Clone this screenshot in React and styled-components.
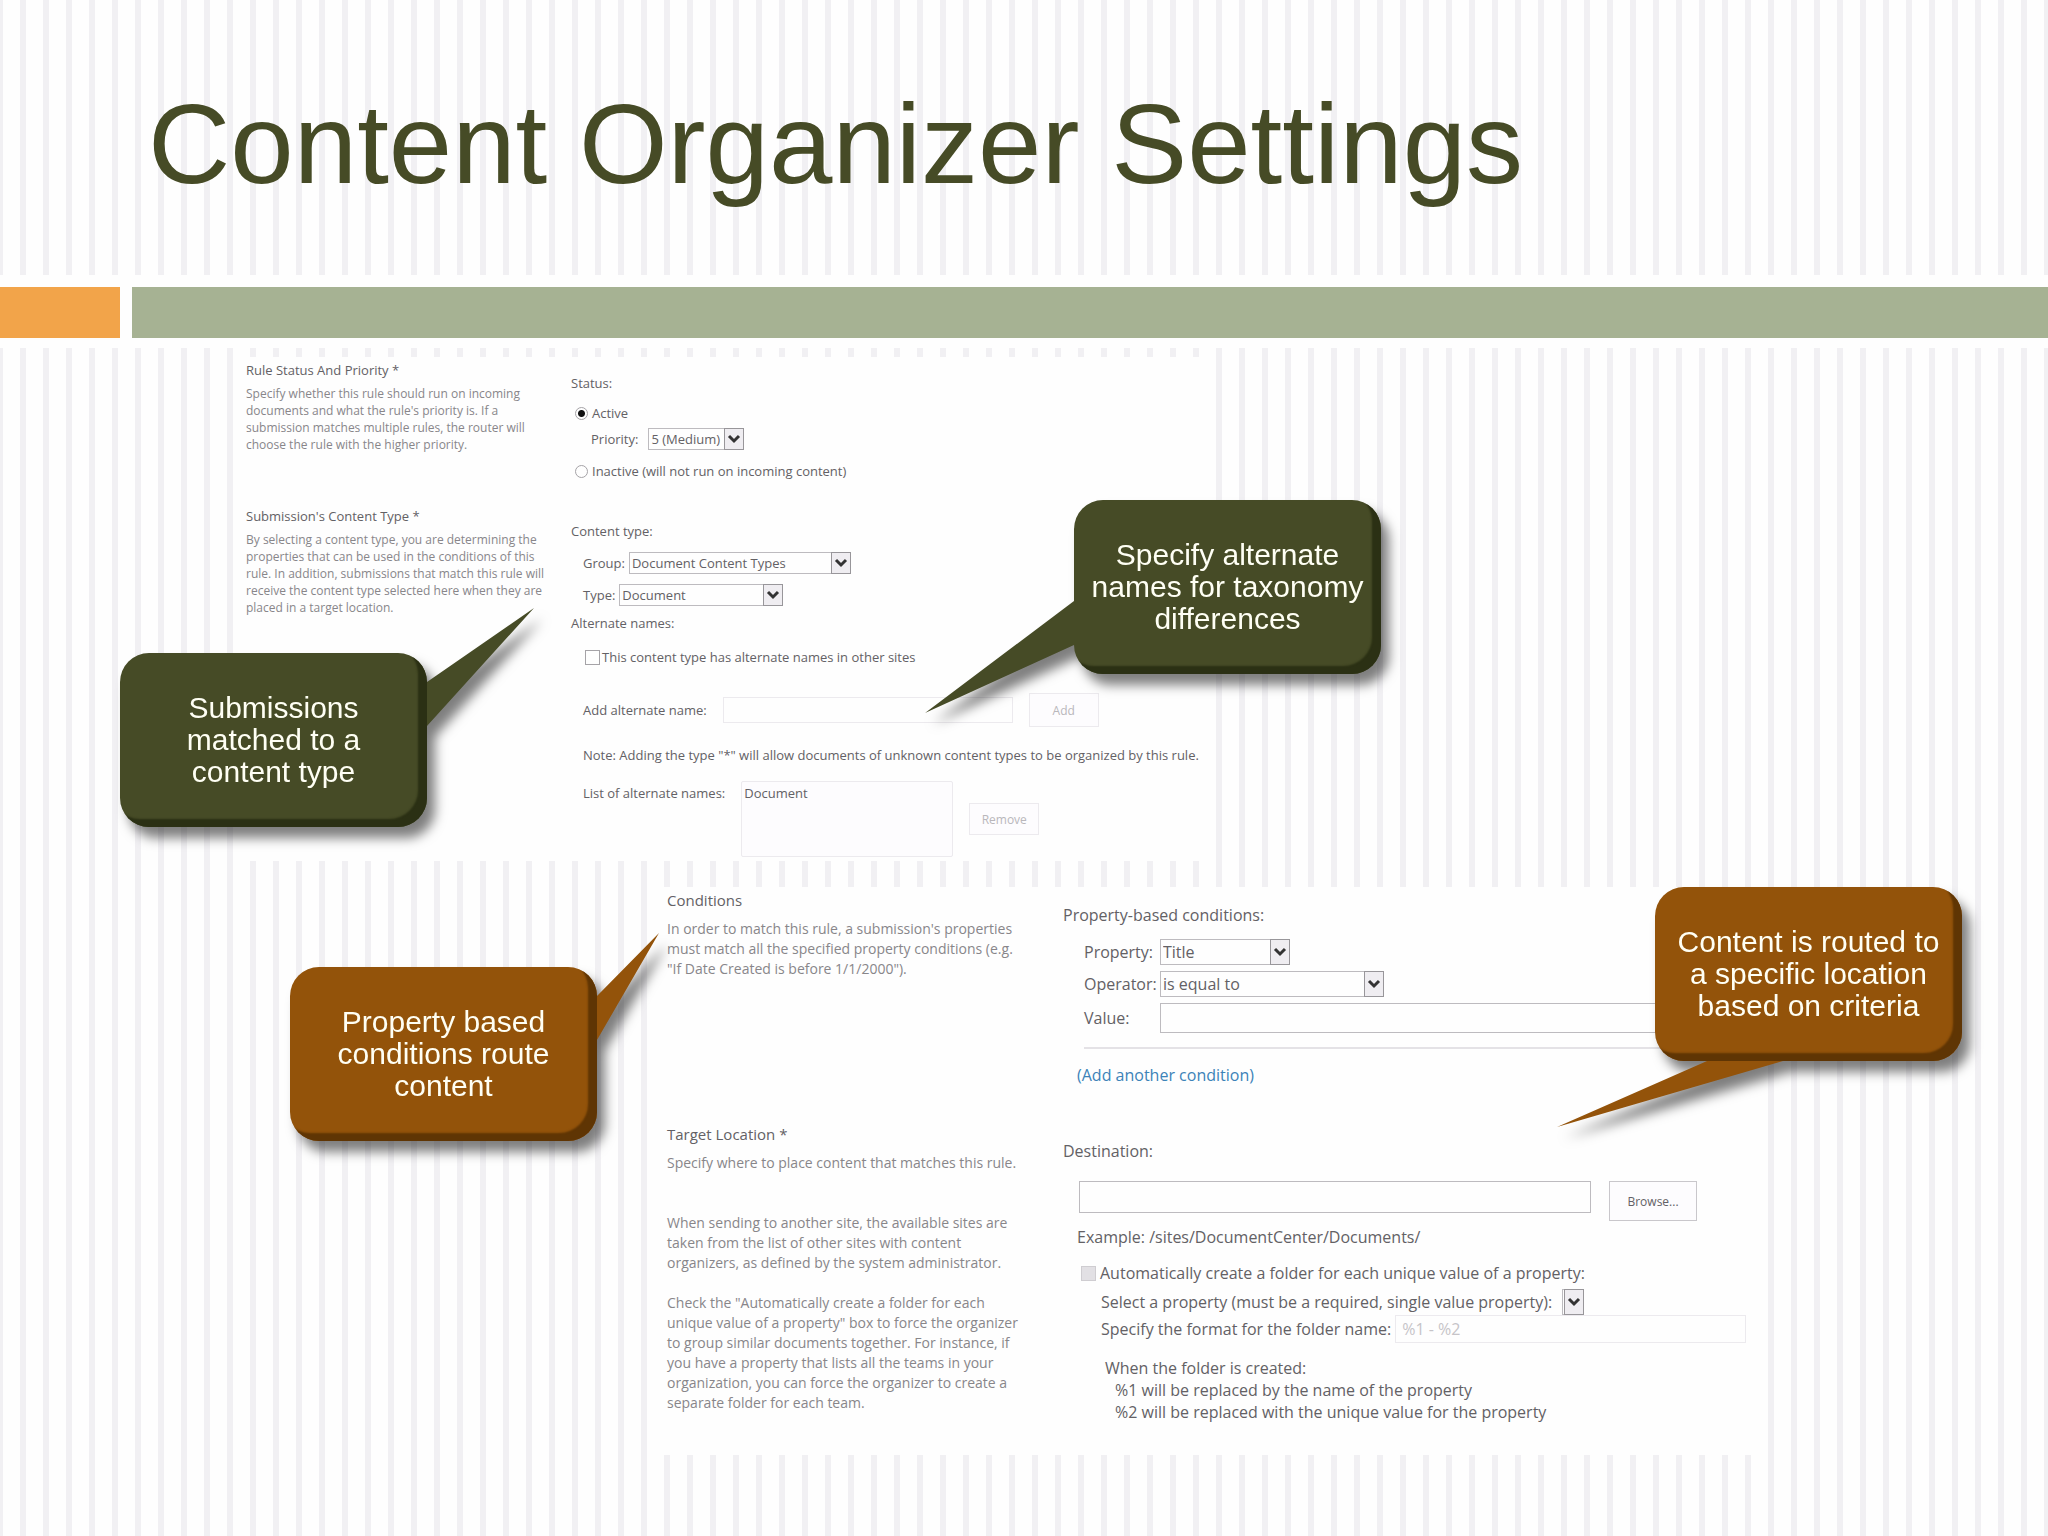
import React from "react";
import styled, { createGlobalStyle } from "styled-components";

const GlobalStyle = createGlobalStyle`
  * {
    box-sizing: border-box;
  }

  body {
    margin: 0;
    min-height: 100vh;
    font-family: "Liberation Sans", Arial, sans-serif;
    background: #fefefe repeating-linear-gradient(
      to right,
      #f1f0f3 0,
      #f1f0f3 3px,
      #fefefe 3px,
      #fefefe 20px,
      #f1f0f3 20px,
      #f1f0f3 23px
    );
  }
`;

const green = { face: "#464b26", edge: "#2b3014" };
const brown = { face: "#93530a", edge: "#5f3504" };

const DropDown = ({ id, value, width, height, label }) => (
  <SelectWrap $width={width} $height={height}>
    <select id={id} defaultValue={value} aria-label={label}>
      <option>{value}</option>
    </select>
    <span className="arrow">
      <svg viewBox="0 0 14 10" width="14" height="10">
        <path d="M2 2 L7 7 L12 2" fill="none" stroke="#333" strokeWidth="3" />
      </svg>
    </span>
  </SelectWrap>
);

const Callout = ({ left, top, colors, tail, children }) => (
  <CalloutView $left={left} $top={top}>
    <svg width="307" height="174">
      <polygon points={tail} fill={colors.face} />
    </svg>
    <CalloutBox $colors={colors}>{children}</CalloutBox>
  </CalloutView>
);

const RuleSection = () => (
  <RulePanel>
    <Column>
      <Heading>Rule Status And Priority *</Heading>
      <Description $top={2}>
        Specify whether this rule should run on incoming
        <br />
        documents and what the rule's priority is. If a
        <br />
        submission matches multiple rules, the router will
        <br />
        choose the rule with the higher priority.
      </Description>

      <Heading $top={50}>Submission's Content Type *</Heading>
      <Description $top={2}>
        By selecting a content type, you are determining the
        <br />
        properties that can be used in the conditions of this
        <br />
        rule. In addition, submissions that match this rule will
        <br />
        receive the content type selected here when they are
        <br />
        placed in a target location.
      </Description>
    </Column>

    <Column>
      <Row $top={14}>Status:</Row>
      <Row $top={6} $indent={4} $gap={4}>
        <Radio id="active" name="status" defaultChecked />
        <label htmlFor="active">Active</label>
      </Row>
      <Row $top={2} $indent={20} $gap={10}>
        <label htmlFor="priority">Priority:</label>
        <DropDown id="priority" value="5 (Medium)" width={96} height={22} />
      </Row>
      <Row $top={8} $indent={4} $gap={4}>
        <Radio id="inactive" name="status" />
        <label htmlFor="inactive">
          Inactive (will not run on incoming content)
        </label>
      </Row>

      <Row $top={36}>Content type:</Row>
      <Row $top={8} $indent={12} $gap={4}>
        <label htmlFor="group">Group:</label>
        <DropDown
          id="group"
          value="Document Content Types"
          width={222}
          height={22}
        />
      </Row>
      <Row $top={8} $indent={12} $gap={4}>
        <label htmlFor="type">Type:</label>
        <DropDown id="type" value="Document" width={164} height={22} />
      </Row>
      <Row $top={4}>Alternate names:</Row>
      <Row $top={10} $indent={14} $gap={2}>
        <CheckBox id="alternate" />
        <label htmlFor="alternate">
          This content type has alternate names in other sites
        </label>
      </Row>
      <Row $top={24} $indent={12} $gap={16}>
        <label htmlFor="add-name">Add alternate name:</label>
        <TextBox id="add-name" $width={290} $height={26} $faint />
        <PanelButton type="button" $width={70} $height={34} $faint>
          Add
        </PanelButton>
      </Row>
      <Row $top={16} $indent={12}>
        Note: Adding the type "*" will allow documents of unknown content types
        to be organized by this rule.
      </Row>
      <Row $top={14} $indent={12} $gap={16} $align="flex-start">
        <label htmlFor="names">List of alternate names:</label>
        <ListBox id="names" size="4">
          <option>Document</option>
        </ListBox>
        <RemoveSlot>
          <PanelButton type="button" $width={70} $height={32} $faint>
            Remove
          </PanelButton>
        </RemoveSlot>
      </Row>
    </Column>

    <Callout
      left={-113}
      top={296}
      colors={green}
      tail="300,29 307,29 414,-45 307,73 300,73"
    >
      Submissions
      <br />
      matched to a
      <br />
      content type
    </Callout>
    <Callout
      left={841}
      top={143}
      colors={green}
      tail="7,101 0,101 -149,213 0,145 7,145"
    >
      Specify alternate
      <br />
      names for taxonomy
      <br />
      differences
    </Callout>
  </RulePanel>
);

const ConditionSection = () => (
  <ConditionPanel>
    <Column>
      <Heading>Conditions</Heading>
      <Description $top={6}>
        In order to match this rule, a submission's properties
        <br />
        must match all the specified property conditions (e.g.
        <br />
        "If Date Created is before 1/1/2000").
      </Description>

      <Heading $top={142}>Target Location *</Heading>
      <Description $top={6}>
        Specify where to place content that matches this rule.
      </Description>
      <Description $top={40}>
        When sending to another site, the available sites are
        <br />
        taken from the list of other sites with content
        <br />
        organizers, as defined by the system administrator.
      </Description>
      <Description $top={20}>
        Check the "Automatically create a folder for each
        <br />
        unique value of a property" box to force the organizer
        <br />
        to group similar documents together. For instance, if
        <br />
        you have a property that lists all the teams in your
        <br />
        organization, you can force the organizer to create a
        <br />
        separate folder for each team.
      </Description>
    </Column>

    <Column>
      <Row $top={16}>Property-based conditions:</Row>
      <Fields>
        <label htmlFor="property">Property:</label>
        <DropDown id="property" value="Title" width={130} height={26} />
        <label htmlFor="operator">Operator:</label>
        <DropDown id="operator" value="is equal to" width={224} height={26} />
        <label htmlFor="value">Value:</label>
        <TextBox id="value" $height={30} />
      </Fields>
      <Divider />
      <Row $top={14} $indent={14}>
        <a href="#add">(Add another condition)</a>
      </Row>

      <Row $top={52}>Destination:</Row>
      <Row $top={18} $indent={16} $gap={18} $align="flex-start">
        <TextBox aria-label="Destination" $width={512} $height={32} />
        <PanelButton type="button" $width={88} $height={40}>
          Browse...
        </PanelButton>
      </Row>
      <Row $top={4} $indent={14}>
        Example: /sites/DocumentCenter/Documents/
      </Row>
      <Row $top={12} $indent={18} $gap={4}>
        <CheckBox id="auto" disabled />
        <label htmlFor="auto">
          Automatically create a folder for each unique value of a property:
        </label>
      </Row>
      <Row $top={4} $indent={38} $gap={10}>
        <label htmlFor="select-property">
          Select a property (must be a required, single value property):
        </label>
        <DropDown id="select-property" value="" width={22} height={26} />
      </Row>
      <Row $indent={38} $gap={4}>
        <label htmlFor="format">Specify the format for the folder name:</label>
        <TextBox
          id="format"
          defaultValue="%1 - %2"
          disabled
          $width={352}
          $height={28}
          $faint
        />
      </Row>
      <Notes>
        When the folder is created:
        <span>%1 will be replaced by the name of the property</span>
        <span>%2 will be replaced with the unique value for the property</span>
      </Notes>
    </Column>

    <Callout
      left={-358}
      top={80}
      colors={brown}
      tail="300,29 307,29 369,-34 307,73 300,73"
    >
      Property based
      <br />
      conditions route
      <br />
      content
    </Callout>
    <Callout
      left={1007}
      top={0}
      colors={brown}
      tail="60,170 52,174 -98,240 128,174 128,170"
    >
      Content is routed to
      <br />
      a specific location
      <br />
      based on criteria
    </Callout>
  </ConditionPanel>
);

export default function App() {
  return (
    <Slide>
      <GlobalStyle />
      <Header>
        <h1>Content Organizer Settings</h1>
      </Header>
      <Band>
        <div className="accent" />
        <div className="bar" />
      </Band>
      <Content>
        <RuleSection />
        <ConditionSection />
      </Content>
    </Slide>
  );
}

const Slide = styled.div`
  display: flex;
  flex-direction: column;
  overflow-x: hidden;
`;

const Header = styled.header`
  padding: 80px 148px 67px;

  h1 {
    margin: 0;
    color: #464b26;
    font-size: 114px;
    font-weight: 400;
    line-height: 128px;
  }
`;

const Band = styled.div`
  display: flex;
  gap: 12px;
  padding: 12px 0 10px;
  background-color: #fefefe;

  .accent {
    width: 120px;
    height: 51px;
    background-color: #f2a44a;
  }

  .bar {
    flex: 1;
    height: 51px;
    background-color: #a6b293;
  }
`;

/* the two panels overlap in the third column */
const Content = styled.main`
  display: grid;
  grid-template-columns: 233fr 415fr 565fr 551fr 284fr;
  row-gap: 26px;
  padding: 9px 0 80px;
`;

const Panel = styled.section`
  display: grid;
  position: relative;
  color: #636165;
  background-color: #fefefe;
  font-family: "Open Sans", "Noto Sans", sans-serif;

  label {
    white-space: nowrap;
  }

  input,
  select,
  button {
    color: inherit;
    font-family: inherit;
    font-size: inherit;
  }

  a {
    color: #3c83b8;
    text-decoration: none;
  }
`;

const RulePanel = styled(Panel)`
  grid-column: 2 / 4;
  grid-template-columns: 325px 1fr;
  padding: 0 0 4px 13px;
  font-size: 13px;
  --heading: 13px;
  --small: 12px;
  --line: 17px;
`;

const ConditionPanel = styled(Panel)`
  grid-column: 3 / 5;
  grid-template-columns: 396px 1fr;
  padding: 0 18px 32px 19px;
  font-size: 16px;
  --heading: 15px;
  --small: 14px;
  --line: 20px;
`;

const Column = styled.div`
  min-width: 0;
`;

const Heading = styled.h2`
  margin: ${({ $top }) => $top || 0}px 0 0;
  font-size: var(--heading);
  font-weight: 400;
  line-height: 26px;
`;

const Description = styled.p`
  margin: ${({ $top }) => $top}px 0 0;
  color: #88868a;
  font-size: var(--small);
  line-height: var(--line);
  white-space: nowrap;
`;

const Row = styled.div`
  display: flex;
  align-items: ${({ $align }) => $align || "center"};
  gap: ${({ $gap }) => $gap || 0}px;
  min-height: 24px;
  margin-top: ${({ $top }) => $top || 0}px;
  padding-left: ${({ $indent }) => $indent || 0}px;
  line-height: 24px;
  white-space: nowrap;
`;

const Radio = styled.input.attrs({ type: "radio" })`
  appearance: none;
  width: 13px;
  height: 13px;
  margin: 0;
  border: 1px solid #a5a3a7;
  border-radius: 50%;

  &:checked {
    background: radial-gradient(circle, #111 0 3px, #fefefe 4px);
  }
`;

const CheckBox = styled.input.attrs({ type: "checkbox" })`
  appearance: none;
  width: 15px;
  height: 15px;
  margin: 0;
  border: 1px solid #a5a3a7;
  background-color: #fefefe;

  &:disabled {
    border-color: #cfcdd1;
    background-color: #e2e0e4;
  }
`;

const TextBox = styled.input.attrs({ type: "text" })`
  width: ${({ $width }) => ($width ? `${$width}px` : "100%")};
  height: ${({ $height }) => $height}px;
  padding: 0 6px;
  border: 1px solid ${({ $faint }) => ($faint ? "#eceaee" : "#bdbbbf")};
  background-color: #fefefe;

  &:disabled {
    color: #c6c4c8;
  }
`;

const SelectWrap = styled.span`
  display: inline-block;
  position: relative;
  width: ${({ $width }) => $width}px;
  height: ${({ $height }) => $height}px;

  select {
    display: block;
    appearance: none;
    width: 100%;
    height: 100%;
    padding: 0 2px;
    border: 1px solid #bdbbbf;
    border-radius: 0;
    background-color: #fefefe;
  }

  .arrow {
    display: flex;
    align-items: center;
    justify-content: center;
    position: absolute;
    top: 0;
    right: 0;
    bottom: 0;
    width: 20px;
    border: 1px solid #98969a;
    background-color: #efedf1;
    pointer-events: none;
  }
`;

const PanelButton = styled.button`
  width: ${({ $width }) => $width}px;
  height: ${({ $height }) => $height}px;
  padding: 0;
  border: 1px solid ${({ $faint }) => ($faint ? "#eceaee" : "#c9c7cb")};
  background-color: #fdfcfe;

  && {
    color: ${({ $faint }) => ($faint ? "#b9b7bb" : "#636165")};
    font-size: 12px;
  }
`;

const ListBox = styled.select`
  width: 212px;
  height: 76px;
  padding: 2px 0;
  border: 1px solid #eceaee;
  background-color: #fdfcfe;
  overflow: hidden;
`;

const RemoveSlot = styled.div`
  padding-top: 22px;
`;

const Fields = styled.div`
  display: grid;
  grid-template-columns: 72px 1fr;
  align-items: center;
  gap: 6px 4px;
  margin-top: 12px;
  padding-left: 21px;
`;

const Divider = styled.hr`
  height: 2px;
  margin: 14px 0 0 21px;
  border: none;
  background-color: #e4e2e6;
`;

const Notes = styled.div`
  display: flex;
  flex-direction: column;
  margin-top: 14px;
  padding-left: 42px;
  line-height: 22px;

  span {
    padding-left: 10px;
  }
`;

const CalloutView = styled.div`
  position: absolute;
  left: ${({ $left }) => $left}px;
  top: ${({ $top }) => $top}px;
  width: 307px;
  filter: drop-shadow(8px 11px 6px rgba(0, 0, 0, 0.5));

  svg {
    position: absolute;
    top: 0;
    left: 0;
    overflow: visible;
  }
`;

const CalloutBox = styled.div`
  display: flex;
  align-items: center;
  justify-content: center;
  position: relative;
  height: 174px;
  border-radius: 29px;
  color: #fffff4;
  background-color: ${({ $colors }) => $colors.face};
  box-shadow: inset -9px -8px 2px ${({ $colors }) => $colors.edge};
  font-family: "Liberation Sans", Arial, sans-serif;
  font-size: 30px;
  line-height: 32px;
  text-align: center;
  white-space: nowrap;
`;
